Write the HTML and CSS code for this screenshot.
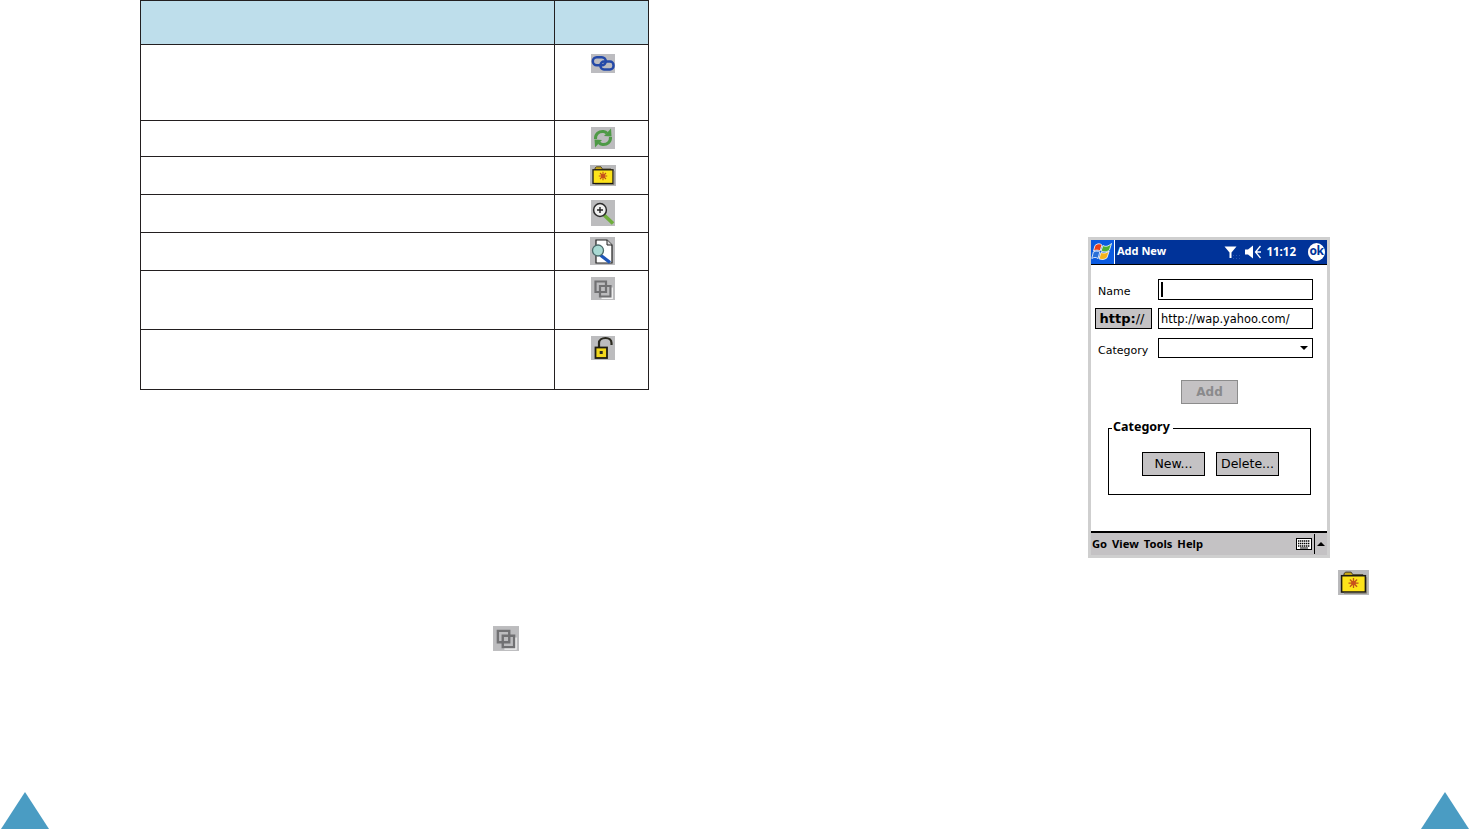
FILE: index.html
```html
<!DOCTYPE html>
<html lang="en">
<head>
<meta charset="utf-8">
<title>Add New</title>
<link rel="stylesheet" href="styles.css">
</head>
<body>
<svg class="defs" width="0" height="0" aria-hidden="true">
  <defs>
    <symbol id="i-folder" viewBox="0 0 26 21">
      <rect width="26" height="21" fill="#b9b9bb"/>
      <path d="M5 5V3L6.500 1.800H11L12.500 4H21V5Z" fill="#c9a818" stroke="#3a3320" stroke-width=".8"/>
      <rect x="3" y="4.800" width="20" height="13.700" fill="#fde31a" stroke="#1d1a14" stroke-width="1.300"/>
      <path d="M13 6.800v8.400M8.800 11h8.400M10 8l6 6M16 8l-6 6" stroke="#c0501e" stroke-width="1.100"/>
      <circle cx="13" cy="11" r="2" fill="#c8501c"/>
      <path d="M24 6v13.500H5" fill="none" stroke="#7f7a68" stroke-width=".8"/>
    </symbol>
    <symbol id="i-copy" viewBox="0 0 24 23">
      <rect width="24" height="23" fill="#bcbcbe"/>
      <path d="M4.500 4.500h10.500v10.500h-10.500z" fill="none" stroke="#717173" stroke-width="2.200"/>
      <path d="M9 9h10.500v10.500h-10.500z" fill="none" stroke="#717173" stroke-width="2.200"/>
      <path d="M21.300 10.500v10.800h-10.800" fill="none" stroke="#f2f2f2" stroke-width="1.200"/>
    </symbol>
  </defs>
</svg>
<main class="spread">
  <section class="page">
    <div class="table">
      <div class="cell head"></div><div class="cell head"></div>
      <div class="cell"></div>
      <div class="cell icon-cell top">
        <svg class="icon i-link" viewBox="0 0 24 19"><rect width="24" height="19" fill="#bcbcc0"/><rect x="1.800" y="3.300" width="13" height="8" rx="4" fill="none" stroke="#2449a8" stroke-width="2.500"/><rect x="9.500" y="7.500" width="13" height="8" rx="3.500" fill="none" stroke="#2449a8" stroke-width="2.500"/></svg>
      </div>
      <div class="cell"></div>
      <div class="cell icon-cell">
        <svg class="icon i-sync" viewBox="0 0 24 22"><rect width="24" height="22" fill="#bcbcbe"/><path d="M4.500 12C4.200 7 8 4 12.500 4.500c1.500.2 2.700.8 3.500 1.700" fill="none" stroke="#4e9a46" stroke-width="3"/><path d="M13 9l7.500.5-.5-8z" fill="#4e9a46"/><path d="M19.500 10c.3 5-3.500 8-8 7.500-1.500-.2-2.700-.8-3.500-1.700" fill="none" stroke="#4e9a46" stroke-width="3"/><path d="M11 13l-7.500-.5.5 8z" fill="#4e9a46"/></svg>
      </div>
      <div class="cell"></div>
      <div class="cell icon-cell"><svg class="icon i-folder"><use href="#i-folder"/></svg></div>
      <div class="cell"></div>
      <div class="cell icon-cell">
        <svg class="icon i-zoom" viewBox="0 0 24 26"><rect width="24" height="26" fill="#bcbcbe"/><path d="M13 15l9 8.500" stroke="#6fae3c" stroke-width="3.600"/><circle cx="9" cy="10" r="6.400" fill="#f0f0f0" stroke="#2b2b2b" stroke-width="1.500"/><path d="M6 10h6M9 7v6" stroke="#222" stroke-width="1.400"/></svg>
      </div>
      <div class="cell"></div>
      <div class="cell icon-cell">
        <svg class="icon i-doc" viewBox="0 0 25 28"><rect width="25" height="28" fill="#bcbcbe"/><path d="M6 3h11l5 5v18H6z" fill="#fff" stroke="#222" stroke-width="1.200"/><path d="M17 3v5h5" fill="#ddd" stroke="#222" stroke-width="1"/><path d="M9 17l11 8.500" stroke="#1e56b8" stroke-width="3.400"/><circle cx="8" cy="13.500" r="5.500" fill="#a9dad3" stroke="#4a6a6a" stroke-width="1.300"/></svg>
      </div>
      <div class="cell"></div>
      <div class="cell icon-cell top top-s"><svg class="icon i-copy"><use href="#i-copy"/></svg></div>
      <div class="cell"></div>
      <div class="cell icon-cell top top-s">
        <svg class="icon i-lock" viewBox="0 0 24 24"><rect width="24" height="24" fill="#bcbcbe"/><path d="M8 11V7C8 4 11 2 14.500 2S20.500 4 20.500 7V9" fill="none" stroke="#2b2a20" stroke-width="2.200"/><rect x="4.500" y="11.500" width="11.500" height="10.500" fill="#f2d71c" stroke="#1f1c12" stroke-width="1.800"/><rect x="8.700" y="15" width="3" height="3" fill="#2b2a20"/></svg>
      </div>
    </div>
    <svg class="icon i-copy-inline"><use href="#i-copy"/></svg>
    <svg class="tri tri-left" viewBox="0 0 48 37"><polygon points="24,0 48,37 0,37"/></svg>
  </section>

  <section class="page">
    <div class="device">
      <header class="titlebar">
        <div class="start">
          <svg class="winlogo" viewBox="0 0 23 24">
            <path d="M4 5.500C7 3 9 3.500 11 5L9 11C7 9.800 5 9.800 2.500 11Z" fill="#e8401c" stroke="#fff" stroke-width=".8"/>
            <path d="M12 5.500C14.500 7 17 6.500 20.500 3.500L18.500 10C15.500 12.500 13 12 10 11Z" fill="#4cb035" stroke="#fff" stroke-width=".8"/>
            <path d="M2.300 12C5 10.800 7 10.800 8.800 12L7 18.500C5 17 3 17.200 .8 18.500Z" fill="#2a6fd8" stroke="#fff" stroke-width=".8"/>
            <path d="M10 12.500C13 13.300 15 13.500 18.200 11L16 17.800C13 20 11 19.800 8 18.800Z" fill="#f4b41c" stroke="#fff" stroke-width=".8"/>
          </svg>
        </div>
        <span class="title">Add New</span>
        <div class="status">
          <svg class="st-ant" viewBox="0 0 19 13"><path d="M.500 .500h12L7.500 6.500V12H5.500V6.500Z" fill="#fff"/><path d="M9 9.500h8M9 12.500h8" stroke="#2a56b0" stroke-dasharray="1 2"/></svg>
          <svg class="st-vol" viewBox="0 0 17 14"><path d="M0 4.500h3L8 .500v13L3 9.500H0Z" fill="#fff"/><path d="M15.500 1l-5 6 5 6M10.500 7H16" fill="none" stroke="#fff" stroke-width="1.300"/></svg>
          <span class="clock">11:12</span>
        </div>
        <span class="ok">ok</span>
      </header>
      <div class="content">
        <div class="form">
          <span class="lbl">Name</span>
          <div class="field field-name"><i class="caret"></i></div>
          <span class="btn btn-http"><b>http:</b>//</span>
          <div class="field field-url">http://wap.yahoo.com/</div>
          <span class="lbl lbl-cat">Category</span>
          <div class="field field-sel"><i class="arrow-down"></i></div>
        </div>
        <span class="btn btn-add">Add</span>
        <fieldset class="group">
          <legend class="legend">Category</legend>
          <div class="group-row">
            <span class="btn btn-sm">New...</span>
            <span class="btn btn-sm">Delete...</span>
          </div>
        </fieldset>
      </div>
      <footer class="menubar">
        <nav class="menu"><span>Go</span><span>View</span><span>Tools</span><span>Help</span></nav>
        <svg class="kbd" viewBox="0 0 16 12"><rect width="16" height="12" fill="#000"/><rect x="1" y="1" width="14" height="10" fill="#fff"/><path d="M2 3h12M2 5.500h12M2 8h12" stroke="#000" stroke-dasharray="1.400 .6" stroke-width="1.500"/><path d="M4 10h8" stroke="#000"/></svg>
        <i class="sep"></i>
        <i class="arrow-up"></i>
      </footer>
    </div>
    <svg class="icon i-folder-inline"><use href="#i-folder"/></svg>
    <svg class="tri tri-right" viewBox="0 0 48 37"><polygon points="24,0 48,37 0,37"/></svg>
  </section>
</main>
</body>
</html>
```
FILE: styles.css
```css
* { box-sizing: border-box; }
html, body { margin: 0; padding: 0; background: #fff; }
body { width: 1470px; height: 830px; overflow: hidden; font-family: "DejaVu Sans", sans-serif; color: #000; }
.defs { display: block; height: 0; }
.spread { display: flex; height: 830px; }
.page { width: 735px; height: 830px; display: flex; flex-direction: column; padding-bottom: 1px; align-items: flex-start; }

.table {
  margin-left: 140px;
  display: grid;
  grid-template-columns: 414px 94px;
  grid-template-rows: 44px 76px 36px 38px 38px 38px 59px 60px;
  border-top: 1px solid #231f20;
  border-left: 1px solid #231f20;
  width: 509px;
}
.cell { border-right: 1px solid #231f20; border-bottom: 1px solid #231f20; }
.head { background: #bedeeb; }
.icon-cell { display: flex; justify-content: center; align-items: center; padding: 0 0 1px 2px; }
.icon-cell.top { align-items: flex-start; padding-top: 9px; }
.icon-cell.top-s { padding-top: 6px; }
.icon { display: block; flex: none; filter: blur(.35px); }
.i-link { width: 24px; height: 19px; }
.i-sync { width: 24px; height: 22px; }
.i-folder { width: 26px; height: 21px; }
.i-zoom { width: 24px; height: 26px; }
.i-doc { width: 25px; height: 28px; }
.i-copy { width: 24px; height: 23px; }
.i-lock { width: 24px; height: 24px; }
.i-copy-inline { width: 26px; height: 25px; margin: 236px 0 0 493px; }
.i-folder-inline { width: 31px; height: 25px; margin: 12px 0 0 603px; }

.tri { display: block; width: 48px; height: 37px; margin-top: auto; fill: #4a9cc3; flex: none; }
.tri-left { margin-left: 1px; }
.tri-right { margin-left: 686px; }

.device {
  margin: 237px 0 0 353px;
  width: 242px;
  height: 321px;
  border: 3px solid #cfcfcf;
  display: flex;
  flex-direction: column;
  background: #fff;
  flex: none;
  font-size: 11px;
}
.titlebar { height: 25px; background: #003399; border-bottom: 1px solid #000; color: #fff; display: flex; align-items: center; flex: none; font-family: "Noto Sans", sans-serif; }
.start { width: 24px; height: 24px; background: #0a5ae0; border-right: 1px solid #fff; flex: none; }
.winlogo { display: block; width: 23px; height: 24px; }
.title { margin-left: 2px; font-weight: 700; font-size: 11px; white-space: nowrap; padding-bottom: 4px; }
.status { margin-left: auto; display: flex; align-items: center; }
.st-ant { width: 19px; height: 13px; margin-right: 2px; }
.st-vol { width: 17px; height: 14px; margin-right: 4px; }
.clock { font-size: 11.5px; font-weight: 700; padding-bottom: 2px; }
.ok { margin: 0 2px 0 12px; width: 17px; height: 18px; border-radius: 50%; background: #fff; color: #003399; font-size: 12px; font-weight: 700; line-height: 16px; text-align: center; letter-spacing: -.5px; }

.content { flex: 1; display: flex; flex-direction: column; align-items: flex-start; min-height: 0; }
.form { margin: 14px 0 0 4px; display: grid; grid-template-columns: 57px 155px; grid-template-rows: 21px 21px 21px; column-gap: 6px; row-gap: 8px; align-items: center; }
.form > .btn-http { height: 21px; }
.lbl { padding: 4px 0 0 3px; font-size: 11px; white-space: nowrap; }
.lbl-cat { padding-top: 6px; }
.field { height: 100%; border: 1px solid #000; font-size: 11.4px; padding-left: 2px; display: flex; align-items: center; white-space: nowrap; }
.field-url { padding-top: 1px; }
.field-sel { height: 20px; align-self: end; justify-content: flex-end; padding-right: 4px; }
.caret { display: block; width: 2px; height: 15px; background: #000; }
.arrow-down { display: block; border: 4px solid transparent; border-top-color: #000; border-bottom-width: 0; }
.btn { display: flex; align-items: center; justify-content: center; background: #c4c2c4; border: 1px solid #000; font-size: 12.5px; white-space: nowrap; }
.btn-http { font-size: 13px; padding-right: 3px; }
.btn-add { margin: 22px 0 0 90px; width: 57px; height: 24px; color: #8a8a8c; border-color: #8c8c8c; font-weight: 700; font-size: 12px; }
.group {
  margin: 15px 0 0 17px;
  padding: 14px 0 0;
  width: 203px;
  height: 76px;
  border: 1px solid #000;
  min-width: 0;
}
.group-row { display: flex; gap: 11px; padding-left: 33px; }
.legend { padding: 0 3px 4px 1px; margin-left: 3px; font-family: "Noto Sans", sans-serif; font-size: 12.5px; font-weight: 700; line-height: 15px; }
.btn-sm { width: 63px; height: 24px; padding-bottom: 2px; }

.menubar { height: 24px; border-top: 2px solid #000; background: #c4c2c4; display: flex; align-items: center; flex: none; }
.menu { display: flex; gap: 5px; margin-left: 1px; padding-bottom: 2px; font-family: "Noto Sans", sans-serif; font-size: 11.2px; font-weight: 700; }
.kbd { width: 16px; height: 12px; margin-left: auto; }
.sep { display: block; width: 1px; height: 20px; background: #000; margin: 0 2px; }
.arrow-up { display: block; border: 4px solid transparent; border-bottom-color: #000; border-top-width: 0; margin-right: 2px; }
```
